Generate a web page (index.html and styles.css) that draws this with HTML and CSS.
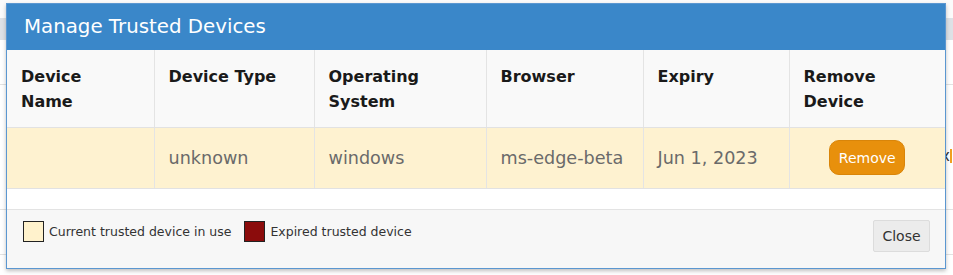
FILE: index.html
```html
<!DOCTYPE html>
<html lang="en">
<head>
    <meta charset="UTF-8">
    <meta name="viewport" content="width=device-width, initial-scale=1.0">
    <title>Manage Trusted Devices</title>
    <link rel="stylesheet" href="styles.css">
</head>
<body>
    <!-- page behind the dialog -->
    <div class="page">
        <div class="page-top"></div>
        <div class="page-bar"></div>
        <div class="page-body">
            <div class="page-row"></div>
            <div class="page-row tall"><span class="page-x">x</span></div>
            <div class="page-row"></div>
        </div>
    </div>

    <div class="modal">
        <div class="modal-header">Manage Trusted Devices</div>
        <div class="modal-body">
            <table class="devices">
                <colgroup>
                    <col style="width: 147px">
                    <col style="width: 160px">
                    <col style="width: 172px">
                    <col style="width: 157px">
                    <col style="width: 146px">
                    <col>
                </colgroup>
                <thead>
                    <tr>
                        <th>Device<br>Name</th>
                        <th>Device Type</th>
                        <th>Operating<br>System</th>
                        <th>Browser</th>
                        <th>Expiry</th>
                        <th>Remove<br>Device</th>
                    </tr>
                </thead>
                <tbody>
                    <tr class="current">
                        <td></td>
                        <td>unknown</td>
                        <td>windows</td>
                        <td>ms-edge-beta</td>
                        <td>Jun 1, 2023</td>
                        <td class="center"><button class="btn-remove">Remove</button></td>
                    </tr>
                </tbody>
            </table>
        </div>
        <div class="modal-footer">
            <div class="legend">
                <span class="swatch swatch-current"></span>
                <span class="legend-text">Current trusted device in use</span>
                <span class="swatch swatch-expired"></span>
                <span class="legend-text">Expired trusted device</span>
            </div>
            <button class="btn-close">Close</button>
        </div>
    </div>
</body>
</html>
```

FILE: styles.css
```css
body { margin: 0; width: 953px; height: 275px; overflow: hidden; position: relative; background: #fff; font-family: "DejaVu Sans", Verdana, sans-serif; }

.page { height: 275px; display: flex; flex-direction: column; }
.page-top { height: 18px; background: #fbfbfb; }
.page-bar { height: 22px; background: #dde1e6; }
.page-body { flex: 1; background: #fff; }
.page-row { height: 44px; border-bottom: 1px solid #e2e2e2; }
.page-row.tall { height: 124px; display: flex; justify-content: flex-end; }
.page-x { font-size: 15px; color: #333; margin-top: 64px; height: 14px; line-height: 14px; margin-right: 1px; border-right: 2px solid #f0a020; }

.modal { position: absolute; left: 6px; top: 3px; width: 940px; height: 266px; box-sizing: border-box; border: 1px solid #5b97d1; background: #fff; display: flex; flex-direction: column; box-shadow: 0 2px 4px rgba(0,0,0,0.25); }
.modal-header { height: 46px; line-height: 46px; padding-left: 17px; background: #3a87c9; color: #fff; font-size: 19.8px; }
.modal-body { padding-bottom: 20px; }

.devices { width: 100%; border-collapse: collapse; table-layout: fixed; }
.devices th, .devices td { border-left: 1px solid #e4e4e4; padding: 13px 14px; text-align: left; }
.devices th:first-child, .devices td:first-child { border-left: none; }
.devices th { background: #f9f9f9; font-size: 16px; font-weight: bold; color: #1a1a1a; line-height: 25px; vertical-align: top; padding-top: 14px; padding-bottom: 13px; border-bottom: 1px solid #e2e2e2; }
.devices td { font-size: 17.6px; color: #6a6a6a; line-height: 25px; vertical-align: middle; border-bottom: 1px solid #e2e2e2; }
.devices tr.current td { background: #fef2d0; }
.devices td.center { text-align: center; padding-top: 12px; padding-bottom: 13px; }

.btn-remove { width: 76px; height: 35px; background: #e8900c; color: #fff; border: 1px solid #d98509; border-radius: 10px; font-family: inherit; font-size: 14px; padding: 0; cursor: pointer; vertical-align: middle; }

.modal-footer { flex: 1; display: flex; justify-content: space-between; align-items: flex-start; padding: 10px 15px 0 16px; background: #f7f7f7; border-top: 1px solid #e3e3e3; }
.legend { display: flex; align-items: center; height: 22px; }
.swatch { width: 19px; height: 19px; border: 1px solid #222; margin-right: 5px; }
.swatch-current { background: #fff2cc; }
.swatch-expired { background: #8b0c0c; }
.legend-text { font-size: 12.5px; color: #333; margin-right: 13px; }

.btn-close { width: 57px; height: 32px; background: #ececec; color: #333; border: 1px solid #dcdcdc; border-radius: 2px; font-family: inherit; font-size: 14px; padding: 0; cursor: pointer; }
```
